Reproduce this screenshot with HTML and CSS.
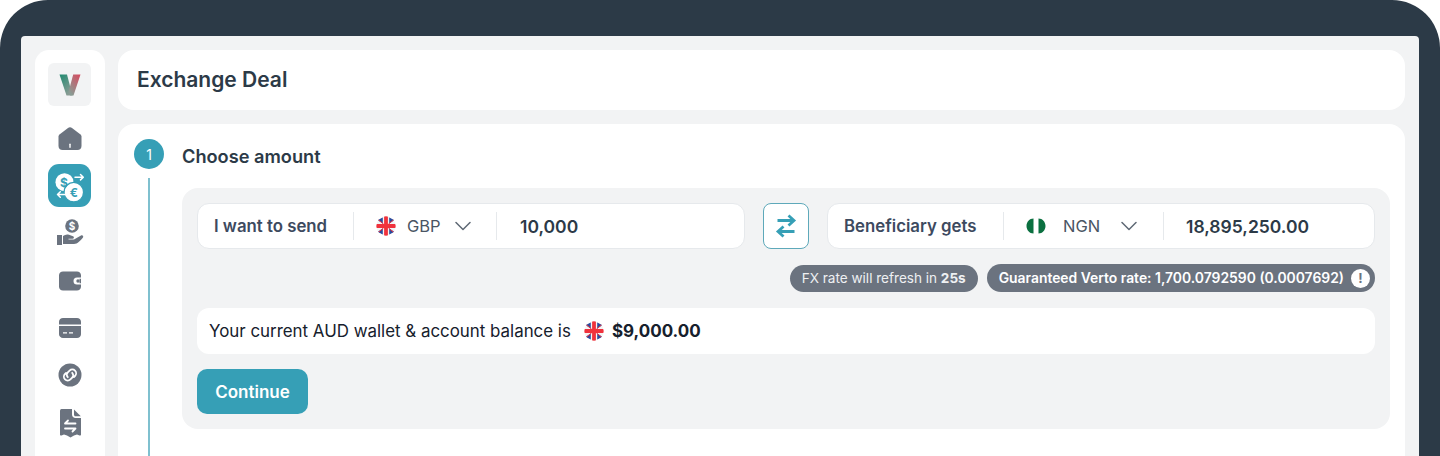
FILE: index.html
```html
<!DOCTYPE html>
<html lang="en">
<head>
  <meta charset="UTF-8" />
  <meta name="viewport" content="width=device-width, initial-scale=1.0" />
  <title>Exchange Deal</title>
  <link rel="stylesheet" href="styles.css">
</head>
<body>
  <svg class="defs" width="0" height="0">
    <defs>
      <g id="ukflag">
        <clipPath id="ukclip"><circle cx="10" cy="10" r="9.700"/></clipPath>
        <g clip-path="url(#ukclip)">
          <rect width="20" height="20" fill="#f4f4f4"/>
          <path d="M1.500 4 6.800 7.800V1.500zM18.500 4 13.200 7.800V1.500zM1.500 16 6.800 12.200V18.500zM18.500 16 13.200 12.200V18.500z" fill="#2a4b9e"/>
          <path d="M1 2.500 7.500 8M19 2.500 12.500 8M1 17.500 7.500 12M19 17.500 12.500 12" stroke="#f0323c" stroke-width="1"/>
          <path d="M10 0v20M0 10h20" stroke="#f0323c" stroke-width="3.800"/>
        </g>
      </g>
    </defs>
  </svg>

  <div class="device">
    <div class="screen">
      <!-- Sidebar -->
      <aside class="sidebar">
        <div class="logo">
          <svg width="24" height="24" viewBox="0 0 24 24">
            <defs>
              <linearGradient id="vleft" x1="0" y1="0" x2="0.6" y2="1">
                <stop offset="0" stop-color="#1f8a70"/>
                <stop offset="1" stop-color="#8a9c94"/>
              </linearGradient>
              <linearGradient id="vright" x1="1" y1="0" x2="0.3" y2="1">
                <stop offset="0" stop-color="#d9495f"/>
                <stop offset="1" stop-color="#8a9c94"/>
              </linearGradient>
            </defs>
            <path d="M1.500 1.500H9L14.500 22.500H8.500z" fill="url(#vleft)"/>
            <path d="M22.500 1.500H15.200L10.500 19 12 22.500H15.500z" fill="url(#vright)"/>
          </svg>
        </div>
        <nav class="nav">
          <a class="nav-item">
            <svg width="24" height="24" viewBox="0 0 24 24"><path d="M.500 9.500c0-.9.400-1.600 1-2.100L10 .900c1.200-.9 2.800-.9 4 0l8.500 6.500c.6.500 1 1.200 1 2.100V19c0 2.600-1.700 4-4 4h-15c-2.300 0-4-1.400-4-4z" fill="#6b737f"/><rect x="11.300" y="16.500" width="1.400" height="4.500" rx=".7" fill="#fff"/></svg>
          </a>
          <a class="nav-item active">
            <svg width="34" height="34" viewBox="0 0 34 34">
              <circle cx="11.500" cy="13.200" r="9" fill="#fff"/>
              <circle cx="20.800" cy="23.200" r="9.800" fill="#fff" stroke="#369fb6" stroke-width="1.400"/>
              <text x="11" y="18" class="coin">$</text>
              <text x="20.800" y="27.700" class="coin">€</text>
              <path d="M22 8.200h8M27.500 5.500 30.300 8.200l-2.800 2.700M13 25.500H4.500M7.300 22.800 4.500 25.500l2.800 2.700" fill="none" stroke="#fff" stroke-width="1.500" stroke-linecap="round" stroke-linejoin="round"/>
            </svg>
          </a>
          <a class="nav-item">
            <svg width="28" height="28" viewBox="0 0 28 28">
              <circle cx="16" cy="7" r="6.800" fill="#6b737f"/>
              <text x="16" y="10.500" class="coin small">$</text>
              <path d="M1 16h5v10H1zM7 17c2-1.500 4-2 6-1.200l4 1.400c1.400.5 1.200 2.600-.6 2.600H12.500v.8h5.500l7-4.200c1.600-.8 3 1 1.800 2.300-2 2.300-5.300 6.300-8.800 6.300H7z" fill="#6b737f"/>
            </svg>
          </a>
          <a class="nav-item">
            <svg width="24" height="24" viewBox="0 0 24 24"><path d="M5 2.500h14c2.200 0 4 1.700 4 3.800v2.200h-4a3.500 3.500 0 0 0 0 7h4v2.200c0 2.100-1.800 3.800-4 3.800H5c-2.200 0-4-1.700-4-3.800V6.300c0-2.100 1.800-3.800 4-3.800z" fill="#6b737f"/><circle cx="20" cy="12" r="1.700" fill="#6b737f"/><path d="M21.500 9.800h1.500v4.400h-1.500z" fill="#6b737f"/></svg>
          </a>
          <a class="nav-item">
            <svg width="24" height="24" viewBox="0 0 24 24"><path d="M5 2h14c2.200 0 4 1.600 4 3.700v2.800H1V5.700C1 3.600 2.800 2 5 2zM1 10h22v8.300c0 2.100-1.800 3.700-4 3.700H5c-2.200 0-4-1.700-4-3.700z" fill="#6b737f"/><path d="M5 16.800h4M11 16.800h4" stroke="#fff" stroke-width="1.300"/></svg>
          </a>
          <a class="nav-item">
            <svg width="24" height="24" viewBox="0 0 24 24"><circle cx="12" cy="12" r="11.500" fill="#6b737f"/><path d="M9.800 14.200a3.400 3.400 0 0 1 0-4.800l1.800-1.800a3.800 3.800 0 0 1 5.400 5.400l-1.100 1.100M14.200 9.800a3.400 3.400 0 0 1 0 4.800l-1.800 1.800a3.800 3.800 0 0 1-5.400-5.400l1.100-1.100" fill="none" stroke="#fff" stroke-width="1.800" stroke-linecap="round"/></svg>
          </a>
          <a class="nav-item">
            <svg width="24" height="30" viewBox="0 0 24 30">
              <path d="M3.500 1H14v5.500c0 2 1.500 3.500 3.500 3.500H23v16.500c0 1-.7 1.300-1.500 1l-2.500-1-3 1-3.500 2-3.500-2-3-1-2.500 1c-.8.300-1.500 0-1.500-1V3.500C2 2 2.300 1 3.500 1z" fill="#6b737f"/>
              <path d="M16 1.500 22.800 8.300H17.500c-.9 0-1.500-.6-1.500-1.500z" fill="#6b737f"/>
              <path d="M17.500 15.500H7M10 12.500 7 15.500M7 20.500H17.500M14.500 23.500l3-3" fill="none" stroke="#fff" stroke-width="1.800" stroke-linecap="round"/>
            </svg>
          </a>
        </nav>
      </aside>

      <!-- Main content -->
      <main class="main">
        <header class="page-header">Exchange Deal</header>
        <section class="steps-card">
          <div class="step-rail">
            <div class="step-num">1</div>
            <div class="step-line"></div>
          </div>
          <div class="step-body">
            <h2 class="step-title">Choose amount</h2>
            <div class="panel">
              <div class="exchange-row">
                <div class="amount-box">
                  <span class="amount-label send-label">I want to send</span>
                  <span class="currency send-currency">
                    <svg width="20" height="20" viewBox="0 0 20 20"><use href="#ukflag"/></svg>
                    <span class="code">GBP</span>
                    <svg class="chevron" width="16" height="10" viewBox="0 0 16 10"><path d="M1 1.500 8 8.500l7-7" fill="none" stroke="#5f6975" stroke-width="1.500" stroke-linecap="round" stroke-linejoin="round"/></svg>
                  </span>
                  <span class="amount-value">10,000</span>
                </div>
                <button class="swap-btn">
                  <svg width="22" height="24" viewBox="0 0 22 24"><path d="M2.500 6.500H19M13.500 1.500 19 6.500 13.500 11.500" fill="none" stroke="#369fb6" stroke-width="2.800"/><path d="M19.500 17.500H3M8.500 12.500 3 17.500 8.500 22.500" fill="none" stroke="#369fb6" stroke-width="2.800"/></svg>
                </button>
                <div class="amount-box">
                  <span class="amount-label get-label">Beneficiary gets</span>
                  <span class="currency get-currency">
                    <svg width="20" height="20" viewBox="0 0 20 20"><path d="M7.500 2.500C3.500 2.500.5 6 .5 10s3 7.500 7 7.500zM12.500 2.500c4 0 7 3.500 7 7.500s-3 7.500-7 7.500z" fill="#0b7040"/></svg>
                    <span class="code">NGN</span>
                    <svg class="chevron" width="16" height="10" viewBox="0 0 16 10"><path d="M1 1.500 8 8.500l7-7" fill="none" stroke="#5f6975" stroke-width="1.500" stroke-linecap="round" stroke-linejoin="round"/></svg>
                  </span>
                  <span class="amount-value">18,895,250.00</span>
                </div>
              </div>

              <div class="rate-row">
                <span class="pill">FX rate will refresh in&nbsp;<b>25s</b></span>
                <span class="pill pill-strong">Guaranteed Verto rate: 1,700.0792590 (0.0007692)<i class="info">!</i></span>
              </div>

              <div class="balance-row">
                <span>Your current AUD wallet &amp; account balance is</span>
                <svg width="20" height="20" viewBox="0 0 20 20"><use href="#ukflag"/></svg>
                <b>$9,000.00</b>
              </div>

              <button class="continue-btn">Continue</button>
            </div>
          </div>
        </section>
      </main>
    </div>
  </div>
</body>
</html>
```

FILE: styles.css
```css
/* Base */
* { margin: 0; padding: 0; box-sizing: border-box; }
html, body { height: 456px; background: #fff; }
body { font-family: 'Inter', sans-serif; color: #2c3a47; }
.defs { display: block; height: 0; }

/* Device frame */
.device {
  height: 456px;
  background: #2c3a47;
  border-radius: 48px 48px 0 0;
  padding: 36px 21px 0 21px;
}
.screen {
  display: flex;
  gap: 13px;
  height: 100%;
  background: #f2f3f4;
  border-radius: 4px 4px 0 0;
  padding: 14px 14px 0 14px;
}

/* Sidebar */
.sidebar {
  width: 70px;
  flex-shrink: 0;
  background: #fff;
  border-radius: 14px 14px 0 0;
  padding: 13px 1px 0 0;
  display: flex;
  flex-direction: column;
  align-items: center;
}
.logo {
  width: 43px;
  height: 43px;
  background: #f2f3f4;
  border-radius: 6px;
  display: flex;
  align-items: center;
  justify-content: center;
}
.nav {
  margin-top: 11px;
  display: flex;
  flex-direction: column;
  align-items: center;
  gap: 4.4px;
}
.nav-item {
  width: 43px;
  height: 43px;
  display: flex;
  align-items: center;
  justify-content: center;
}
.nav-item.active {
  background: #369fb6;
  border-radius: 11px;
}
.coin {
  font-family: 'Inter', sans-serif;
  font-size: 12px;
  font-weight: 700;
  fill: #369fb6;
  text-anchor: middle;
}
.coin.small { fill: #fff; font-size: 10px; }

/* Main */
.main {
  flex: 1;
  display: flex;
  flex-direction: column;
  gap: 14px;
}
.page-header {
  height: 60px;
  background: #fff;
  border-radius: 16px;
  padding: 0 19px 2px;
  display: flex;
  align-items: center;
  font-size: 21px;
  font-weight: 600;
}
.steps-card {
  flex: 1;
  display: flex;
  background: #fff;
  border-radius: 16px 16px 0 0;
  padding: 15px 15px 0 16px;
}

/* Step rail */
.step-rail {
  width: 30px;
  display: flex;
  flex-direction: column;
  align-items: center;
  gap: 9px;
}
.step-num {
  width: 30px;
  height: 30px;
  flex-shrink: 0;
  border-radius: 50%;
  background: #369fb6;
  color: #fff;
  font-size: 14px;
  display: flex;
  align-items: center;
  justify-content: center;
}
.step-line {
  flex: 1;
  width: 2px;
  background: #7fc0cf;
}
.step-body {
  flex: 1;
  margin-left: 18px;
}
.step-title {
  font-size: 18.2px;
  font-weight: 600;
  line-height: 20px;
  margin: 7px 0 22px;
}

/* Grey panel */
.panel {
  background: #f2f3f4;
  border-radius: 16px;
  padding: 15px;
  height: 241px;
}
.exchange-row {
  display: flex;
  gap: 18px;
}
.amount-box {
  flex: 1;
  height: 46px;
  background: #fff;
  border: 1px solid #e6e9ec;
  border-radius: 12px;
  display: flex;
  align-items: center;
  padding-left: 16px;
}
.amount-label {
  font-size: 16.8px;
  font-weight: 600;
  color: #3d4a5f;
  height: 28px;
  line-height: 28px;
  border-right: 1px solid #e6e9ec;
}
.send-label { width: 140px; }
.get-label { width: 160px; }
.currency {
  display: flex;
  align-items: center;
  height: 28px;
  padding-left: 22px;
  border-right: 1px solid #e6e9ec;
  font-size: 16.5px;
  color: #4a5563;
}
.send-currency { width: 143px; }
.get-currency { width: 160px; }
.code { margin: 0 14px 0 11px; }
.get-currency .code { margin: 0 21px 0 17px; }
.amount-value {
  margin-left: 23px;
  font-size: 17.5px;
  font-weight: 600;
}
.get-currency + .amount-value { margin-left: 22px; }
.swap-btn {
  width: 46px;
  height: 46px;
  flex-shrink: 0;
  background: #fff;
  border: 1px solid #5ea9ba;
  border-radius: 8px;
  display: flex;
  align-items: center;
  justify-content: center;
}

/* Rate pills */
.rate-row {
  display: flex;
  justify-content: flex-end;
  align-items: center;
  gap: 9px;
  margin-top: 15px;
}
.pill {
  height: 27px;
  background: #6b737f;
  color: #eef0f2;
  border-radius: 14px;
  padding: 0 12px;
  display: flex;
  align-items: center;
  font-size: 13.55px;
  white-space: nowrap;
}
.pill-strong {
  height: 28px;
  font-size: 13.9px;
  font-weight: 600;
  color: #fff;
  padding-right: 5px;
}
.info {
  width: 19px;
  height: 19px;
  margin-left: 7px;
  border-radius: 50%;
  background: #fff;
  color: #6b737f;
  font-style: normal;
  font-weight: 700;
  font-size: 13px;
  display: flex;
  align-items: center;
  justify-content: center;
}

/* Balance */
.balance-row {
  height: 46px;
  margin-top: 16px;
  background: #fff;
  border-radius: 12px;
  padding-left: 12px;
  display: flex;
  align-items: center;
  gap: 13px;
  font-size: 16.9px;
  color: #16202c;
}
.balance-row b { font-weight: 700; margin-left: -5px; font-size: 17px; }

.continue-btn {
  display: block;
  width: 111px;
  height: 45px;
  margin-top: 15px;
  background: #369fb6;
  color: #fff;
  border: none;
  border-radius: 10px;
  font-family: inherit;
  font-size: 17px;
  font-weight: 600;
}
```
